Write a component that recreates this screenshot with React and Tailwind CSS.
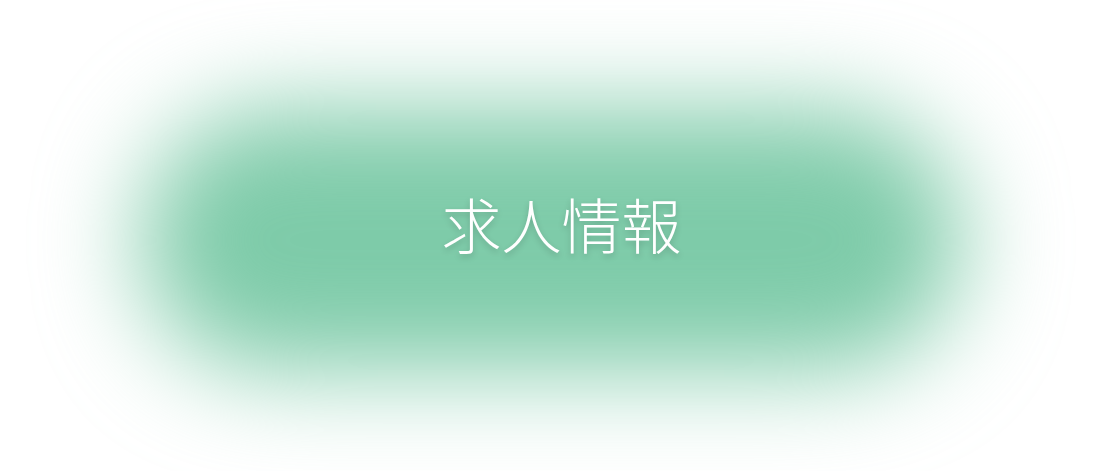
import React from "react";

export default function App() {
  return (
    <div className="w-full h-[471px] bg-white overflow-hidden grid place-items-center">
      <div className="[grid-area:1/1] w-[820px] h-[260px] rounded-full bg-[#7ecba9] blur-[50px] mt-[8px]" />
      <h1
        className="[grid-area:1/1] relative z-10 text-white text-[60px] font-light leading-none mb-[26px] ml-[22px] [text-shadow:0_3px_6px_rgba(0,0,0,0.18)]"
        style={{ fontFamily: '"Noto Sans CJK JP", "Noto Sans", sans-serif' }}
      >
        求人情報
      </h1>
    </div>
  );
}
